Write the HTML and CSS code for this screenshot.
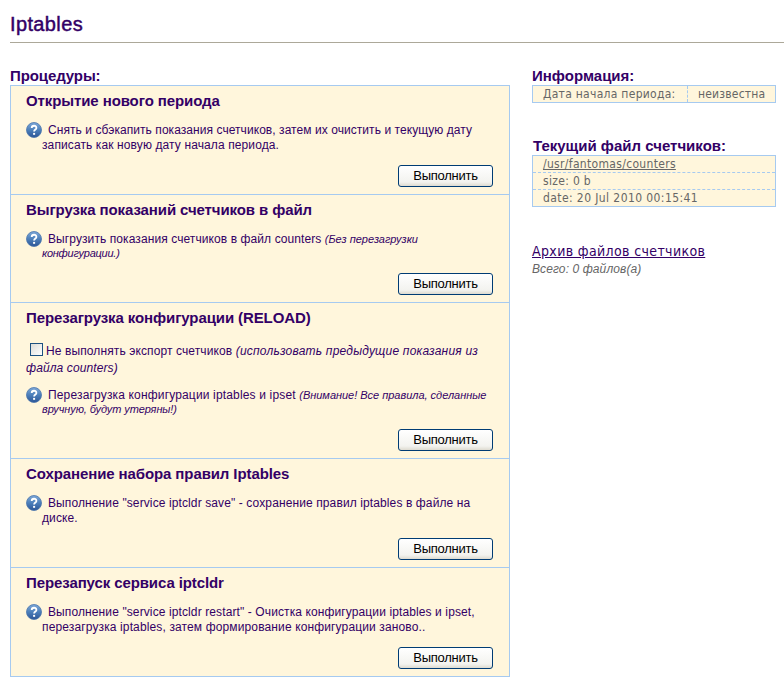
FILE: index.html
```
<!DOCTYPE html>
<html lang="ru">
<head>
<meta charset="utf-8">
<title>Iptables</title>
<link rel="stylesheet" href="styles.css">
</head>
<body>
<svg class="defs" aria-hidden="true">
  <defs>
    <linearGradient id="ball" x1="0" y1="0" x2="0" y2="1">
      <stop offset="0" stop-color="#7fa9d8"/>
      <stop offset=".5" stop-color="#4c7fba"/>
      <stop offset="1" stop-color="#2c5596"/>
    </linearGradient>
    <symbol id="help" viewBox="0 0 16 16">
      <circle cx="8" cy="8" r="7.5" fill="url(#ball)" stroke="#4a75ac" stroke-width=".8"/>
      <path d="M5.7 6.1C5.7 3 10.4 3 10.4 5.9C10.4 7.6 8.1 7.5 8.1 9.6" fill="none" stroke="#fff" stroke-width="1.8"/>
      <rect x="7.1" y="10.9" width="2" height="1.9" fill="#fff"/>
    </symbol>
  </defs>
</svg>
<h1>Iptables</h1>
<main>
  <section class="left">
    <h2 class="tight">Процедуры:</h2>
    <div class="procs">
      <article class="proc">
        <h3>Открытие нового периода</h3>
        <p class="desc"><svg class="ico"><use href="#help"/></svg><span class="a1">Снять и сбэкапить показания счетчиков, затем их очистить и текущую дату</span><br><span>записать как новую дату начала периода.</span></p>
        <button>Выполнить</button>
      </article>
      <article class="proc short">
        <h3>Выгрузка показаний счетчиков в файл</h3>
        <p class="desc"><svg class="ico"><use href="#help"/></svg><span class="b1">Выгрузить показания счетчиков в файл counters <i>(Без перезагрузки</i></span><br><i class="b2">конфигурации.)</i></p>
        <button>Выполнить</button>
      </article>
      <article class="proc tall">
        <h3>Перезагрузка конфигурации (RELOAD)</h3>
        <p class="opt"><input type="checkbox">Не выполнять экспорт счетчиков <em class="c1">(использовать предыдущие показания из</em><br><em>файла counters)</em></p>
        <p class="desc"><svg class="ico"><use href="#help"/></svg><span class="d1">Перезагрузка конфигурации iptables и ipset <i>(Внимание! Все правила, сделанные</i></span><br><i class="d2">вручную, будут утеряны!)</i></p>
        <button>Выполнить</button>
      </article>
      <article class="proc">
        <h3>Сохранение набора правил Iptables</h3>
        <p class="desc"><svg class="ico"><use href="#help"/></svg><span>Выполнение "service iptcldr save" - сохранение правил iptables в файле на</span><br><span>диске.</span></p>
        <button>Выполнить</button>
      </article>
      <article class="proc">
        <h3>Перезапуск сервиса iptcldr</h3>
        <p class="desc"><svg class="ico"><use href="#help"/></svg><span>Выполнение "service iptcldr restart" - Очистка конфигурации iptables и ipset,</span><br><span class="f2">перезагрузка iptables, затем формирование конфигурации заново..</span></p>
        <button>Выполнить</button>
      </article>
    </div>
  </section>
  <aside>
    <h2>Информация:</h2>
    <div class="info"><span class="key">Дата начала периода:</span><span class="val">неизвестна</span></div>
    <h2 class="second">Текущий файл счетчиков:</h2>
    <ul class="file">
      <li><a href="#">/usr/fantomas/counters</a></li>
      <li>size: 0 b</li>
      <li class="date">date: 20 Jul 2010 00:15:41</li>
    </ul>
    <a class="archive" href="#">Архив файлов счетчиков</a>
    <p class="total">Всего: 0 файлов(а)</p>
  </aside>
</main>
</body>
</html>
```
FILE: styles.css
```
* { box-sizing: border-box; }
body { margin: 0; padding: 12px 0 0 10px; width: 784px; height: 692px; overflow: hidden; background: #fff; color: #330066; font: 12px/15px "Liberation Sans", sans-serif; white-space: nowrap; }
.defs { position: absolute; width: 0; height: 0; }
h1, h2, h3, p, ul { margin: 0; padding: 0; }
h1 { height: 31px; border-bottom: 1px solid #aca899; font-size: 20px; line-height: 24px; font-weight: normal; letter-spacing: .37px; -webkit-text-stroke: .45px #330066; }
main { display: flex; gap: 22px; padding-top: 24px; }
.left { width: 500px; }
h2, h3 { font-size: 15px; line-height: 18px; font-weight: bold; }
h3, .tight { letter-spacing: -.1px; }
.procs { border: 1px solid #a6caf0; background: #fff6dc; }
.proc { height: 109px; padding: 6px 16px 0 15px; display: flex; flex-direction: column; }
.proc.short { height: 108px; }
.proc.tall { height: 156px; }
.proc + .proc { border-top: 1px solid #a6caf0; }
.proc:first-child { height: 108px; }
.desc { margin-top: 12px; padding-left: 16px; letter-spacing: .11px; }
.ico { width: 16px; height: 16px; margin: 0 6px 0 -16px; vertical-align: -4px; }
i { font-size: 11px; letter-spacing: -.02px; }
.a1 { letter-spacing: .06px; }
.b1 { letter-spacing: .09px; }
.b2, .d2 { position: relative; top: -1px; }
.b2 { letter-spacing: -.25px; }
.c1 { letter-spacing: .21px; }
.d1 { letter-spacing: .16px; }
.d2 { letter-spacing: -.1px; }
.f2 { letter-spacing: .13px; }
button { align-self: flex-end; margin: auto 0 7px; width: 95px; height: 22px; padding: 0 0 2px; border: 1px solid #003c74; border-radius: 3px; background: linear-gradient(#fff, #f3f3ef 80%, #dedbd0); color: #000; font: 13px "Liberation Sans", sans-serif; letter-spacing: -.25px; }
.opt { margin: 16px 0 -2px; line-height: 17px; letter-spacing: .11px; }
.opt input { appearance: none; width: 13px; height: 13px; margin: 0 3px 0 4px; border: 1px solid #1c5180; background: linear-gradient(135deg, #dcdcd7, #fff); vertical-align: -1px; }
aside { width: 244px; color: #666; font: 12px/16px "DejaVu Sans Condensed", "DejaVu Sans", sans-serif; }
aside h2 { color: #330066; font-family: "Liberation Sans", sans-serif; }
.info { display: flex; height: 18px; border: 1px solid #a6caf0; background: #fff6dc; }
.key { width: 155px; padding-left: 10px; border-right: 1px dashed #a6caf0; line-height: 17px; letter-spacing: .28px; }
.val { padding-left: 10px; line-height: 17px; letter-spacing: .2px; }
.second { margin-top: 34px; padding-left: 1px; }
.file { list-style: none; border: 1px solid #a6caf0; background: #fff6dc; letter-spacing: .32px; }
.file li { height: 17px; padding-left: 10px; line-height: 17px; }
.file li:first-child { height: 16px; }
.file li + li { border-top: 1px dashed #a6caf0; }
.file .date { letter-spacing: .41px; }
.file a { color: #666; }
.archive { display: block; margin-top: 34px; color: #330066; font-size: 14px; line-height: 20px; letter-spacing: .36px; }
.total { font: italic 12px/16px "Liberation Sans", sans-serif; letter-spacing: .1px; }
```
